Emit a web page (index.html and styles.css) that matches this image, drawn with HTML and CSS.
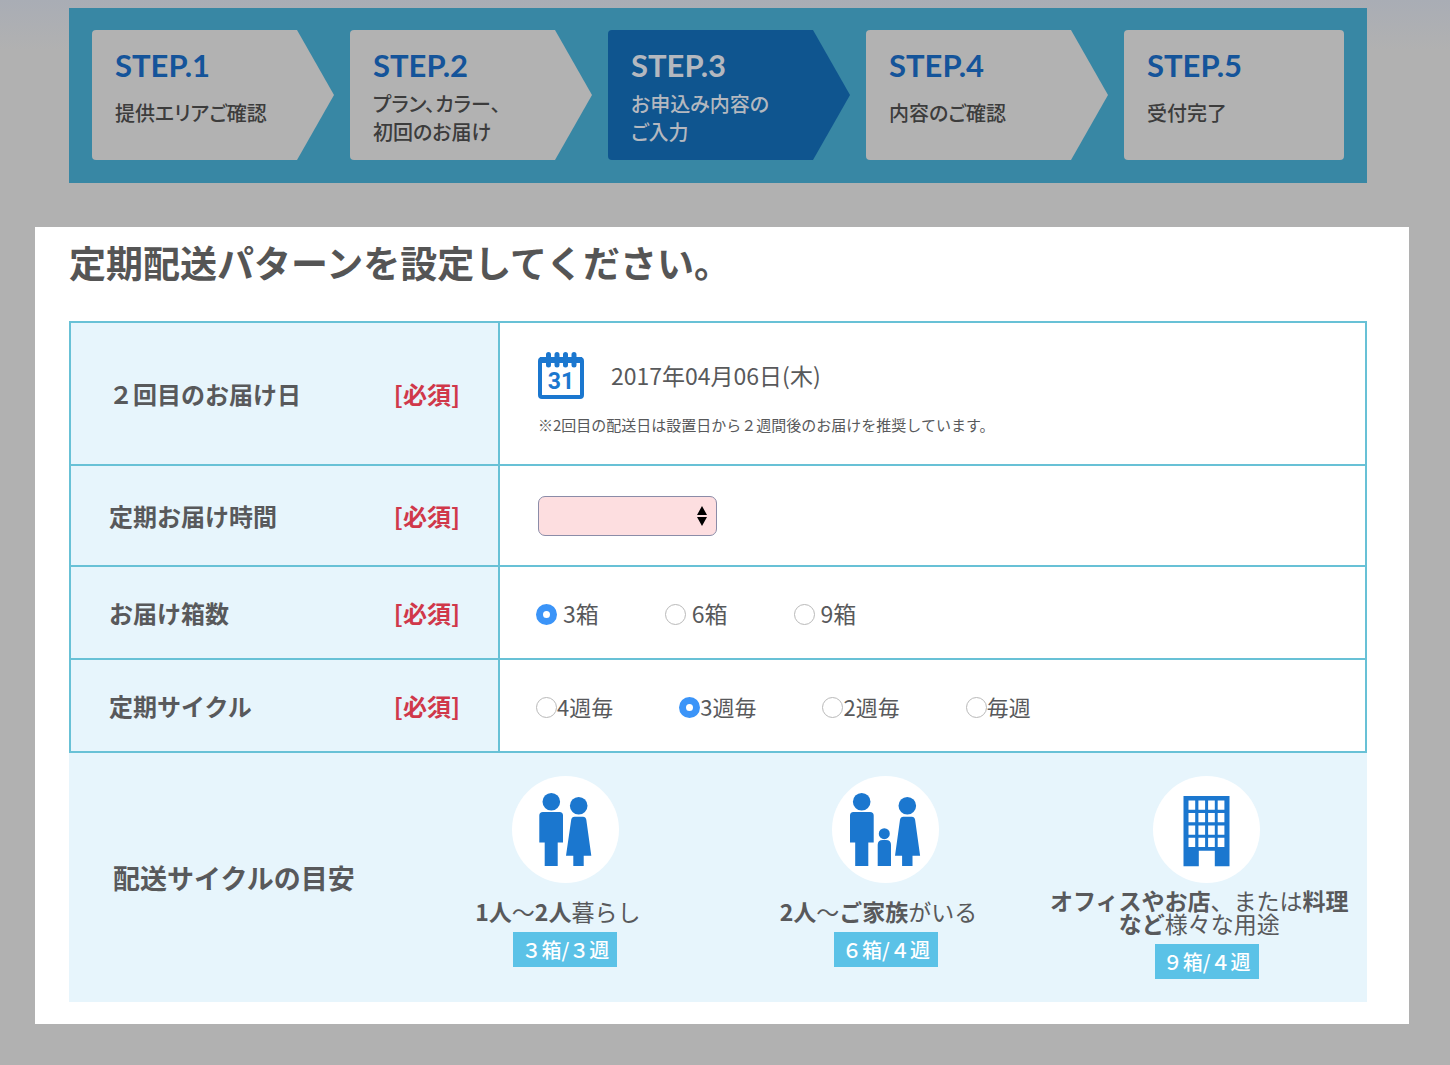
FILE: index.html
```html
<!DOCTYPE html>
<html lang="ja">
<head>
<meta charset="utf-8">
<meta name="viewport" content="width=device-width, initial-scale=1">
<title>定期配送パターンの設定</title>
<link rel="stylesheet" href="styles.css">
</head>
<body>
<ol class="steps">
  <li class="step step-short"><span class="step-no">STEP.1</span><span class="step-text">提供エリアご確認</span></li>
  <li class="step"><span class="step-no">STEP.2</span><span class="step-text">プラン、カラー、<br>初回のお届け</span></li>
  <li class="step step-current" aria-current="step"><span class="step-no">STEP.3</span><span class="step-text">お申込み内容の<br>ご入力</span></li>
  <li class="step step-short"><span class="step-no">STEP.4</span><span class="step-text">内容のご確認</span></li>
  <li class="step step-short step-last"><span class="step-no">STEP.5</span><span class="step-text">受付完了</span></li>
</ol>

<main class="panel">
  <h1 class="panel-title">定期配送パターンを設定してください。</h1>
  <form>
    <table class="form-table">
      <tr class="row-date">
        <th scope="row"><div class="label"><span>２回目のお届け日</span><span class="required">[必須]</span></div></th>
        <td>
          <div class="date">
            <button type="button" class="calendar" aria-label="カレンダー">
              <svg viewBox="0 0 47 47" width="47" height="47" aria-hidden="true">
                <rect x="2" y="7" width="42" height="38" rx="2" fill="#fff" stroke="#1b77cf" stroke-width="4"/>
                <path d="M2 8h42" stroke="#1b77cf" stroke-width="6"/>
                <path d="M10.500 2.500v10.500M19 2.500v10.500M27.500 2.500v10.500M36 2.500v10.500" stroke="#1b77cf" stroke-width="5" stroke-linecap="round"/>
                <text x="23" y="37" text-anchor="middle" class="calendar-day">31</text>
              </svg>
            </button>
            <span>2017年04月06日(木)</span>
          </div>
          <p class="note">※2回目の配送日は設置日から２週間後のお届けを推奨しています。</p>
        </td>
      </tr>
      <tr class="row-time">
        <th scope="row"><div class="label"><label for="time">定期お届け時間</label><span class="required">[必須]</span></div></th>
        <td>
          <div class="select">
            <select id="time" name="time"><option value=""></option><option>午前中</option><option>午後</option></select>
            <svg class="select-arrows" viewBox="0 0 10 20" width="10" height="20" aria-hidden="true"><path d="M5 0l5 9H0zM5 20l5-9H0z"/></svg>
          </div>
        </td>
      </tr>
      <tr class="row-options">
        <th scope="row"><div class="label"><span>お届け箱数</span><span class="required">[必須]</span></div></th>
        <td>
          <div class="options options-boxes">
            <label><input type="radio" name="boxes" checked>3箱</label>
            <label><input type="radio" name="boxes">6箱</label>
            <label><input type="radio" name="boxes">9箱</label>
          </div>
        </td>
      </tr>
      <tr class="row-options">
        <th scope="row"><div class="label"><span>定期サイクル</span><span class="required">[必須]</span></div></th>
        <td>
          <div class="options options-cycle">
            <label><input type="radio" name="cycle">4週毎</label>
            <label><input type="radio" name="cycle" checked>3週毎</label>
            <label><input type="radio" name="cycle">2週毎</label>
            <label><input type="radio" name="cycle">毎週</label>
          </div>
        </td>
      </tr>
    </table>
  </form>

  <section class="guide">
    <h2 class="guide-title">配送サイクルの目安</h2>
    <div class="guide-item">
      <svg class="guide-icon" viewBox="0 0 107 107" width="107" height="107" aria-hidden="true">
        <circle cx="53.500" cy="53.500" r="53.500" fill="#fff"/>
        <g fill="#1b77cf">
          <circle cx="39.300" cy="25.700" r="8.800"/>
          <path d="M31 36h16.500q3.500 0 3.500 3.500v27h-5.300V90h-13V66.500h-5.400v-27Q27.300 36 31 36z"/>
          <circle cx="66.700" cy="29.700" r="8.800"/>
          <path d="M62.500 40.700h8.500q2.700 0 3.300 3l5 36h-7.600V90H61.300V79.700H54l5.200-36q.6-3 3.300-3z"/>
        </g>
      </svg>
      <p class="guide-text"><b>1人</b>〜<b>2人</b>暮らし</p>
      <span class="badge">３箱/３週</span>
    </div>
    <div class="guide-item">
      <svg class="guide-icon" viewBox="0 0 107 107" width="107" height="107" aria-hidden="true">
        <circle cx="53.500" cy="53.500" r="53.500" fill="#fff"/>
        <g fill="#1b77cf">
          <circle cx="29.700" cy="25.700" r="8.800"/>
          <path d="M21.500 36h16.500q3.700 0 3.700 3.500v27h-5.400V90H23.200V66.500H18v-27Q18 36 21.500 36z"/>
          <circle cx="52.300" cy="57.700" r="5.500"/>
          <path d="M45.700 90V69q0-5 5-5h3.300q5 0 5 5v21z"/>
          <circle cx="75.300" cy="29.700" r="8.800"/>
          <path d="M71.300 40.700h8.500q2.700 0 3.300 3l5 36h-7.600V90H70.100V79.700H63l5-36q.6-3 3.300-3z"/>
        </g>
      </svg>
      <p class="guide-text"><b>2人</b>〜<b>ご家族</b>がいる</p>
      <span class="badge">６箱/４週</span>
    </div>
    <div class="guide-item guide-item-long">
      <svg class="guide-icon" viewBox="0 0 107 107" width="107" height="107" aria-hidden="true">
        <circle cx="53.500" cy="53.500" r="53.500" fill="#fff"/>
        <path fill="#1b77cf" d="M30.500 20h46v70.300H61.800V74.700h-16v15.600H30.500z"/>
        <path fill="#fff" d="M35.500 24.500h6.700v9.300h-6.700zM45.400 24.500h6.700v9.300h-6.700zM55.100 24.500h6.700v9.300h-6.700zM64.700 24.500h6.700v9.300h-6.700zM35.500 37h6.700v9.300h-6.700zM45.400 37h6.700v9.300h-6.700zM55.100 37h6.700v9.300h-6.700zM64.700 37h6.700v9.300h-6.700zM35.500 49.400h6.700v9.300h-6.700zM45.400 49.400h6.700v9.300h-6.700zM55.100 49.400h6.700v9.300h-6.700zM64.700 49.400h6.700v9.300h-6.700zM35.500 61.700h6.700V71h-6.700zM45.400 61.700h6.700V71h-6.700zM55.100 61.700h6.700V71h-6.700zM64.700 61.700h6.700V71h-6.700z"/>
      </svg>
      <p class="guide-text"><b>オフィスやお店</b>、または<b>料理など</b>様々な用途</p>
      <span class="badge">９箱/４週</span>
    </div>
  </section>
</main>
</body>
</html>
```
FILE: styles.css
```css
* {
  box-sizing: border-box;
}

body {
  margin: 0;
  padding: 8px 41px 41px 35px;
  background: #b1b1b1 linear-gradient(#a9adb5, #b1b1b1 50px) no-repeat;
  color: #58595b;
  font-family: "Noto Sans CJK JP", sans-serif;
  font-size: 23px;
}

h1, h2, p {
  margin: 0;
}

/* progress banner */
.steps {
  display: grid;
  grid-template-columns: repeat(4, 242fr) 220fr;
  gap: 16px;
  margin: 0 42px 44px 34px;
  padding: 22px 23px 23px;
  background: #3887a4;
  list-style: none;
}

.step {
  display: flex;
  flex-direction: column;
  gap: 7px;
  min-height: 130px;
  padding: 17px 20px 14px 23px;
  border-radius: 4px;
  background: #b2b2b2;
  clip-path: polygon(0 0, calc(100% - 37px) 0, 100% 50%, calc(100% - 37px) 100%, 0 100%);
}

.step-short {
  gap: 16px;
}

.step-last {
  clip-path: none;
}

.step-no {
  color: #14549a;
  font-family: Lato, sans-serif;
  font-size: 31px;
  font-weight: 700;
  line-height: 36px;
}

.step-text {
  color: #3c3c3c;
  font-size: 20px;
  font-weight: 500;
  line-height: 28px;
  white-space: nowrap;
  font-feature-settings: "palt";
}

.step-current {
  background: #0f558f;
}

.step-current .step-no,
.step-current .step-text {
  color: #b4b8bf;
}

/* highlighted panel */
.panel {
  padding: 8px 42px 22px 34px;
  background: #fff;
}

.panel-title {
  margin-bottom: 32px;
  color: #555;
  font-size: 37px;
  font-weight: 700;
  line-height: 54px;
}

.form-table {
  width: 100%;
  border-collapse: collapse;
  table-layout: fixed;
}

.form-table th,
.form-table td {
  padding: 0 38px;
  border: 2px solid #68c1d6;
  text-align: left;
}

.form-table th {
  width: 429px;
  background: #e7f5fc;
  font-size: 24px;
  font-weight: 700;
}

.row-date {
  height: 143px;
}

.row-time {
  height: 101px;
}

.row-options {
  height: 93px;
}

.label {
  display: flex;
  justify-content: space-between;
}

.required {
  color: #d0384a;
}

.date {
  display: flex;
  align-items: center;
  gap: 26px;
}

.calendar {
  display: flex;
  padding: 0;
  border: 0;
  background: none;
}

.calendar-day {
  fill: #1b77cf;
  font-family: Roboto, sans-serif;
  font-size: 23px;
  font-weight: 700;
}

.note {
  margin-top: 14px;
  font-size: 15px;
  line-height: 23px;
}

.select {
  display: grid;
  align-items: center;
  width: 179px;
}

.select select,
.select-arrows {
  grid-area: 1 / 1;
}

.select select {
  width: 100%;
  height: 40px;
  padding: 0 24px 0 8px;
  border: 1px solid #8b8ca8;
  border-radius: 7px;
  background: #fddee0;
  font: inherit;
  appearance: none;
}

.select-arrows {
  justify-self: end;
  margin-right: 10px;
  pointer-events: none;
}

.options {
  display: flex;
  gap: 66px;
  margin-left: -2px;
}

.options label {
  display: flex;
  align-items: center;
}

.options-boxes label {
  gap: 6px;
}

.options-cycle {
  font-size: 22px;
}

.options input {
  width: 21px;
  height: 21px;
  margin: 4px 0 0;
  border: 1px solid #b9b9b9;
  border-radius: 50%;
  background: #fff;
  appearance: none;
}

.options input:checked {
  border: 7px solid #3b94f8;
}

/* delivery cycle guide */
.guide {
  display: grid;
  grid-template-columns: 336px repeat(3, 1fr);
  padding: 23px 0;
  background: #e7f5fc;
}

.guide-title {
  align-self: center;
  padding-left: 44px;
  font-size: 27px;
  font-weight: 700;
}

.guide-item {
  display: flex;
  flex-direction: column;
  align-items: center;
}

.guide-text {
  margin: 17px 0 9px;
  padding-right: 15px;
  line-height: 23px;
  text-align: center;
}

.guide-item-long .guide-text {
  margin-top: 6px;
}

.badge {
  padding: 0 8px;
  background: #5bc2e7;
  color: #fff;
  font-size: 20px;
  font-weight: 500;
  line-height: 35px;
}
```
